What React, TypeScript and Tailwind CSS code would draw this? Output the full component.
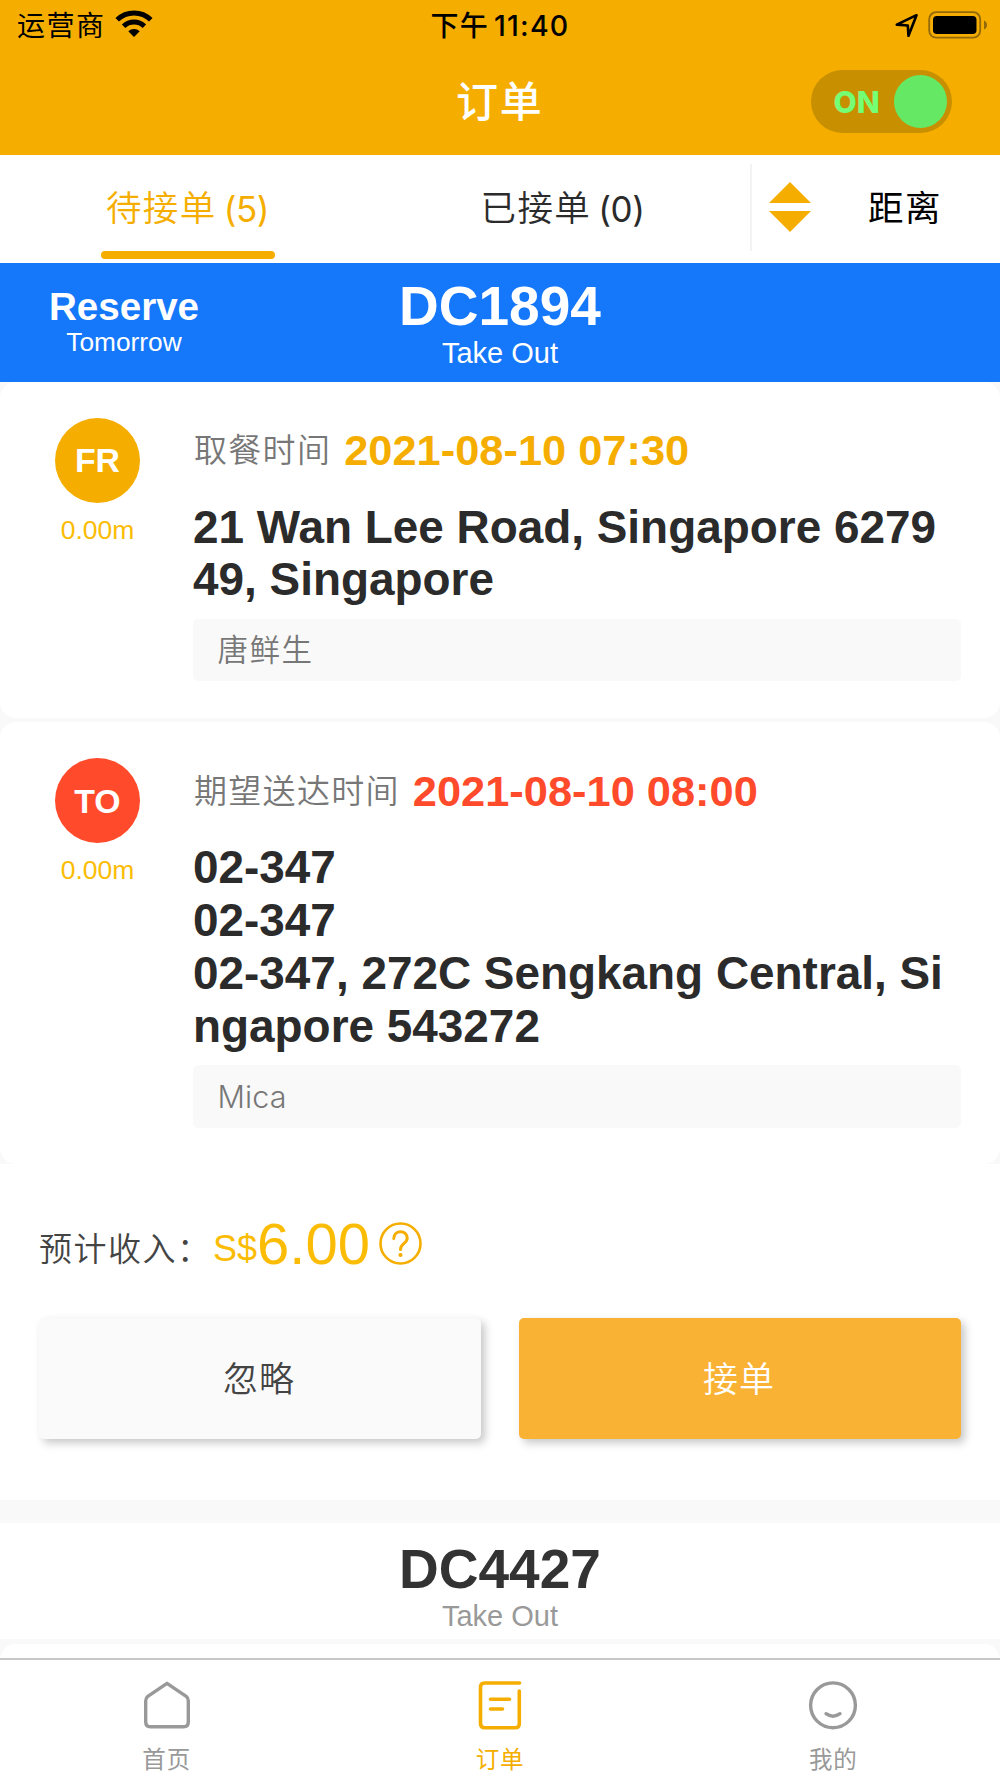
import { useState } from 'react'
import clsx from 'clsx'

interface Stop {
  tag: string
  distance: string
  label: string
  time: string
  address: string[]
  contact: string
}

const pickup: Stop = {
  tag: 'FR',
  distance: '0.00m',
  label: '取餐时间',
  time: '2021-08-10 07:30',
  address: ['21 Wan Lee Road, Singapore 6279', '49, Singapore'],
  contact: '唐鲜生',
}

const dropoff: Stop = {
  tag: 'TO',
  distance: '0.00m',
  label: '期望送达时间',
  time: '2021-08-10 08:00',
  address: ['02-347', '02-347', '02-347, 272C Sengkang Central, Si', 'ngapore 543272'],
  contact: 'Mica',
}

function StatusBar() {
  return (
    <div className="flex h-[50px] items-center justify-between pl-[17px] pr-[12px] text-black">
      <div className="flex w-[400px] items-center">
        <span className="pt-[2px] text-[28px] leading-[50px] tracking-[1.5px]">运营商</span>
        <svg className="ml-[9px] -mt-[3px]" width="38" height="28" viewBox="0 0 38 28" fill="none" stroke="#000">
          <path d="M2.2 9.8a24.2 24.2 0 0 1 33.6 0" strokeWidth="5" />
          <path d="M8.6 16.2a15 15 0 0 1 20.8 0" strokeWidth="5" />
          <path d="M13.3 21.3a8.2 8.2 0 0 1 11.4 0L19 27z" fill="#000" stroke="none" />
        </svg>
      </div>
      <div className="flex items-center whitespace-nowrap pr-[5px] pt-[1px]">
        <span className="text-[28px] font-medium leading-[50px] tracking-[1.2px]">下午</span>
        <span className="ml-[5px] text-[28.5px] font-medium leading-[50px] tracking-[1.2px]">11:40</span>
      </div>
      <div className="flex w-[400px] items-center justify-end">
        <svg width="24" height="24" viewBox="0 0 24 24" fill="none" stroke="#000" strokeWidth="2.6" strokeLinejoin="round">
          <path d="M21.5 2.2 1.8 11.6l11 .9.7 10.3z" />
        </svg>
        <svg className="ml-[9px]" width="60" height="28" viewBox="0 0 60 28">
          <rect x="1.2" y="1.2" width="51" height="25.4" rx="7" fill="none" stroke="#93690a" strokeWidth="1.8" />
          <rect x="5" y="5" width="43.5" height="18" rx="3.8" fill="#000" />
          <path d="M56 9.5c4 1.6 4 7.4 0 9z" fill="#93690a" />
        </svg>
      </div>
    </div>
  )
}

function Header() {
  const [online, setOnline] = useState(true)

  return (
    <header className="h-[154.5px] shrink-0 bg-[#f5ae00]">
      <StatusBar />
      <div className="flex h-[103px] items-center justify-between pr-[48px]">
        <div className="w-[140px]" />
        <h1 className="pl-[48px] text-[42px] font-medium leading-[60px] tracking-[1.8px] text-white">订单</h1>
        <button
          onClick={() => setOnline(!online)}
          className="flex h-[63px] w-[140.5px] items-center justify-between rounded-full bg-[#c88f00] pl-[22px] pr-[5px]"
        >
          <span className="pt-[1px] text-[30px] font-extrabold leading-none text-[#75ff75]">
            {online ? 'ON' : 'OFF'}
          </span>
          <span className="h-[53px] w-[53px] rounded-full bg-[#65e965]" />
        </button>
      </div>
    </header>
  )
}

function Tabs() {
  const [active, setActive] = useState(0)
  const tabs = [
    { name: '待接单', count: 5 },
    { name: '已接单', count: 0 },
  ]

  return (
    <div className="flex h-[108.5px] shrink-0 bg-white">
      {tabs.map((tab, i) => (
        <button
          key={tab.name}
          onClick={() => setActive(i)}
          className="flex h-full w-[375px] flex-col items-center pt-[24.5px]"
        >
          <span
            className={clsx(
              'flex h-[60px] items-center text-[35.5px]',
              active === i ? 'text-[#f5ae00]' : 'text-[#2b2b2b]',
            )}
          >
            <span className="font-[350] tracking-[1.4px]">{tab.name}</span>
            <span className="ml-[7px] text-[35px] tracking-[-0.5px]">({tab.count})</span>
          </span>
          {active === i && <span className="mt-[12px] h-[7.5px] w-[174px] rounded-full bg-[#f5ae00]" />}
        </button>
      ))}
      <button className="mt-[9.5px] flex h-[87px] w-[250px] items-center border-l-2 border-[#f3f3f3] pl-[17px]">
        <svg className="-mt-[2px]" width="42" height="50" viewBox="0 0 42 50" fill="#f5ae00">
          <path d="M21 0 42 21H0z" />
          <path d="M21 50 42 29H0z" />
        </svg>
        <span className="ml-[57px] pt-[2px] text-[35.5px] leading-none tracking-[1.4px] text-black">距离</span>
      </button>
    </div>
  )
}

function StopCard({ stop, danger }: { stop: Stop; danger?: boolean }) {
  return (
    <div className="flex rounded-[16px] bg-white pb-[36.5px] pl-[55px] pr-[39px] pt-[36px]">
      <div className="flex w-[85px] shrink-0 flex-col items-center">
        <div
          className={clsx(
            "flex h-[85px] w-[85px] items-center justify-center rounded-full font-['Liberation_Sans'] text-[33.8px] font-bold text-white",
            danger ? 'bg-[#ff4b2b]' : 'bg-[#f5ae00]',
          )}
        >
          {stop.tag}
        </div>
        <span className="mt-[11px] font-['Liberation_Sans'] text-[26.5px] leading-[32px] text-[#fbbc05]">
          {stop.distance}
        </span>
      </div>
      <div className="ml-[53px] flex-1">
        <div className="flex h-[67px] items-center whitespace-nowrap pl-[1px]">
          <span className="text-[33px] font-[350] tracking-[1.3px] text-[#777]">{stop.label}</span>
          <span
            className={clsx(
              "ml-[13px] font-['Liberation_Sans'] text-[43.4px] font-bold",
              danger ? 'text-[#ff4b2b]' : 'text-[#f5ae00]',
            )}
          >
            {stop.time}
          </span>
        </div>
        <div className="mt-[16px] font-['Liberation_Sans'] text-[45.9px] font-bold leading-[52.7px] text-[#2b2b2b]">
          {stop.address.map((line, i) => (
            <div key={i} className="whitespace-nowrap">{line}</div>
          ))}
        </div>
        <div
          className={clsx(
            'mt-[13px] flex h-[62.5px] items-center rounded-[5px] bg-[#f9f9f9] pl-[24.5px] text-[30.5px] font-[350] text-[#777]',
            danger ? 'tracking-[0.1px]' : 'tracking-[1.5px]',
          )}
        >
          {stop.contact}
        </div>
      </div>
    </div>
  )
}

function OrderTitle({ code, reserved }: { code: string; reserved?: boolean }) {
  return (
    <div
      className={clsx(
        "grid grid-cols-[248px_504px_248px] font-['Liberation_Sans'] text-center",
        reserved ? 'h-[118.5px] bg-[#1577fa] text-white' : 'h-[116px] bg-white text-[#333]',
      )}
    >
      <div className="pt-[24px]">
        {reserved && (
          <>
            <div className="text-[38.6px] font-bold leading-[40px]">Reserve</div>
            <div className="text-[26.3px] leading-[30px]">Tomorrow</div>
          </>
        )}
      </div>
      <div className={reserved ? 'pt-[13px]' : 'pt-[15.5px]'}>
        <div className="text-[55px] font-bold leading-[60px]">{code}</div>
        <div className={clsx('mt-[1px] text-[29px] leading-[32px]', !reserved && 'text-[#999]')}>Take Out</div>
      </div>
    </div>
  )
}

function Income() {
  return (
    <div className="h-[335.5px] bg-white px-[39px] pt-[46px]">
      <div className="flex h-[70px] items-center text-[#444]">
        <span className="w-[174px] whitespace-nowrap pt-[9px] text-[33px] font-[350] tracking-[1.5px]">预计收入：</span>
        <span className="-mt-[2px] flex items-baseline font-['Liberation_Sans'] text-[#fbbc05]">
          <span className="-translate-y-[3px] text-[36px]">S$</span>
          <span className="text-[58px] leading-[70px]">6.00</span>
        </span>
        <svg className="ml-[9px] mt-[-3px]" width="43" height="43" viewBox="0 0 43 43" fill="none" stroke="#f5ae00">
          <circle cx="21.5" cy="21.5" r="20" strokeWidth="2.6" />
          <path d="M14.8 16.5c.3-9 13.4-9 13.4-.3 0 5.3-6.7 5.2-6.7 11.3" strokeWidth="3" strokeLinecap="round" />
          <circle cx="21.5" cy="33" r="2.1" fill="#f5ae00" stroke="none" />
        </svg>
      </div>
      <div className="mt-[37.5px] flex justify-between text-[35px] font-[350] tracking-[1px]">
        <button className="h-[121px] w-[442px] rounded-[5px] bg-[#fafafa] pr-[2px] pt-[3px] text-[#444] shadow-[4px_4px_8px_rgba(0,0,0,0.22)]">
          忽略
        </button>
        <button className="h-[121px] w-[442px] rounded-[5px] bg-[#fab235] pr-[2px] pt-[3px] text-white shadow-[4px_4px_8px_rgba(0,0,0,0.22)]">
          接单
        </button>
      </div>
    </div>
  )
}

function HomeIcon() {
  return (
    <svg width="50" height="50" viewBox="0 0 50 50" fill="none" stroke="#999" strokeWidth="3.4" strokeLinejoin="round">
      <path d="M25 3.3 5.8 16.4Q3.7 18 3.7 20.8V42q0 4.8 4.8 4.8h33q4.8 0 4.8-4.8V20.8q0-2.8-2.1-4.4z" />
    </svg>
  )
}

function OrderIcon() {
  return (
    <svg width="50" height="50" viewBox="0 0 50 50" fill="none" stroke="#f5ae00" strokeWidth="3.6" strokeLinecap="round">
      <path d="M44.5 3H9.5Q5.5 3 5.5 7v36.5q0 4.2 4.2 4.2h30.6q4 0 4-4V11" />
      <path d="M15.5 19.3h19M15.5 29h12" />
    </svg>
  )
}

function MineIcon() {
  return (
    <svg width="50" height="50" viewBox="0 0 50 50" fill="none" stroke="#999" strokeWidth="3.4" strokeLinecap="round">
      <circle cx="25" cy="25.3" r="22.4" />
      <path d="M18 33.7q7 5 14 0" />
    </svg>
  )
}

function TabBar() {
  const items = [
    { name: '首页', icon: <HomeIcon /> },
    { name: '订单', icon: <OrderIcon />, active: true },
    { name: '我的', icon: <MineIcon /> },
  ]

  return (
    <nav className="grid h-[120px] shrink-0 grid-cols-3 border-t-2 border-[#c8c8c8] bg-white">
      {items.map((item) => (
        <div key={item.name} className="flex flex-col items-center pt-[20px]">
          {item.icon}
          <span
            className={clsx(
              'mt-[13px] text-[23.5px] leading-[34px] tracking-[0.8px]',
              item.active ? 'text-[#f5ae00]' : 'text-[#999]',
            )}
          >
            {item.name}
          </span>
        </div>
      ))}
    </nav>
  )
}

export default function App() {
  return (
    <div className="flex h-[1778px] w-[1000px] flex-col overflow-hidden bg-white font-['Inter','Noto_Sans_CJK_SC',sans-serif]">
      <Header />
      <Tabs />
      <main className="min-h-0 flex-1 overflow-hidden bg-[#f9f9f9]">
        <OrderTitle code="DC1894" reserved />
        <StopCard stop={pickup} />
        <div className="h-[4.5px]" />
        <StopCard stop={dropoff} danger />
        <Income />
        <div className="h-[23.5px]" />
        <OrderTitle code="DC4427" />
        <div className="mt-[4.5px] h-[60px] rounded-[16px] bg-white" />
      </main>
      <TabBar />
    </div>
  )
}
